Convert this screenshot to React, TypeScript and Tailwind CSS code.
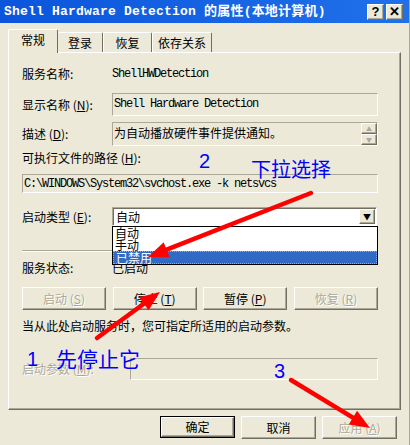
import React from 'react'

// raised / sunken bevels used all over the classic dialog
const raised =
  'border border-t-white border-l-white border-r-[#716f64] border-b-[#716f64] shadow-[inset_-1px_-1px_0_#aca899]'
const sunken =
  'border border-t-[#aca899] border-l-[#aca899] border-r-white border-b-white'
const mono = "font-['Liberation_Mono',monospace] text-[12px] tracking-[-1.2px]"
const dim = 'text-[#aca899] [text-shadow:1px_1px_0_#fff]'

function Arrow({ x1, y1, x2, y2 }: { x1: number; y1: number; x2: number; y2: number }) {
  const dx = x2 - x1
  const dy = y2 - y1
  const len = Math.hypot(dx, dy)
  const ux = dx / len
  const uy = dy / len
  const L = 20
  const W = 8
  const bx = x2 - ux * L
  const by = y2 - uy * L
  const pts = `${x2},${y2} ${bx - uy * W},${by + ux * W} ${bx + uy * W},${by - ux * W}`
  return (
    <g>
      <line x1={x1} y1={y1} x2={bx} y2={by} stroke="#ff0000" strokeWidth={4.5} strokeLinecap="round" />
      <polygon points={pts} fill="#ff0000" />
    </g>
  )
}

function Btn({ children, disabled, def, w = 'w-[84px]' }: { children: React.ReactNode; disabled?: boolean; def?: boolean; w?: string }) {
  const inner = (
    <div className={`${raised} ${def ? 'h-full' : 'h-[23px]'} w-full flex items-center justify-center bg-[#ece9d8] ${disabled ? dim : ''}`}>
      {children}
    </div>
  )
  if (def) return <div className={`${w} h-[22px] border border-black`}>{inner}</div>
  return <div className={w}>{inner}</div>
}

export default function App() {
  return (
    <div className="relative w-[410px] h-[445px] bg-[#ece9d8] overflow-hidden text-[12px] text-black font-['Noto_Sans_CJK_SC',sans-serif] leading-none border-r border-r-[#aca899]">
      {/* title bar */}
      <div className="flex items-center h-[23px] pl-[4px] pr-[6px] bg-gradient-to-r from-[#0a55dc] to-[#2070ea]">
        <span className="font-['Liberation_Mono','Noto_Sans_CJK_SC',monospace] font-bold text-[13px] text-white tracking-[0.2px]">
          Shell Hardware Detection 的属性(本地计算机)
        </span>
        <div className="ml-auto flex gap-[2px]">
          <div className={`${raised} w-[17px] h-[16px] bg-[#ece9d8] flex items-center justify-center font-['Liberation_Sans',sans-serif] font-bold text-[13px]`}>?</div>
          <div className={`${raised} w-[17px] h-[16px] bg-[#ece9d8] flex items-center justify-center font-['Liberation_Sans',sans-serif] font-bold text-[13px]`}>✕</div>
        </div>
      </div>

      {/* tabs */}
      <div className="relative z-10 flex items-end h-[23px] mt-[6px] pl-[8px]">
        <div className="w-[50px] h-[24px] -mb-[1px] bg-[#ece9d8] border-t border-l border-white border-r border-r-[#716f64] rounded-t-[2px] flex items-center justify-center pb-[3px]">常规</div>
        <div className="w-[45px] h-[20px] border-t border-white border-r border-r-[#716f64] rounded-t-[2px] flex items-center justify-center">登录</div>
        <div className="w-[49px] h-[20px] border-t border-l border-white border-r border-r-[#716f64] rounded-t-[2px] flex items-center justify-center">恢复</div>
        <div className="w-[60px] h-[20px] border-t border-l border-white border-r border-r-[#716f64] rounded-t-[2px] flex items-center justify-center">依存关系</div>
      </div>

      {/* tab panel */}
      <div className={`${raised} mx-[8px] h-[358px] pl-[13px] pt-[11px] flex flex-col`}>
        <div className="flex items-center h-[20px]">
          <div className="w-[90px]">服务名称:</div>
          <div className={mono}>ShellHWDetection</div>
        </div>

        <div className="flex items-center h-[23px] mt-[9px]">
          <div className="w-[90px]">显示名称 (<u>N</u>):</div>
          <div className={`${sunken} w-[266px] h-full pl-[1px] pt-[4px] ${mono}`}>Shell Hardware Detection</div>
        </div>

        <div className="flex items-center h-[24px] mt-[6px]">
          <div className="w-[90px]">描述 (<u>D</u>):</div>
          <div className={`${sunken} w-[266px] h-full flex`}>
            <div className="flex-1 pl-[1px] pt-[4px]">为自动播放硬件事件提供通知。</div>
            <div className="w-[16px] flex flex-col">
              <div className={`${raised} h-[11px] flex items-center justify-center text-[#aca899] text-[6px]`}>▲</div>
              <div className={`${raised} h-[11px] flex items-center justify-center text-[#aca899] text-[6px]`}>▼</div>
            </div>
          </div>
        </div>

        <div className="flex items-center h-[16px] mt-[4px]">可执行文件的路径 (<u>H</u>):</div>

        <div className={`${sunken} w-[356px] h-[19px] mt-[8px] pl-[1px] flex items-center ${mono}`}>
          C:\WINDOWS\System32\svchost.exe -k netsvcs
        </div>

        <div className="flex items-center h-[19px] mt-[14px]">
          <div className="w-[90px]">启动类型 (<u>E</u>):</div>
          <div className="w-[265px] h-full bg-white border border-t-[#aca899] border-l-[#aca899] border-r-white border-b-white shadow-[inset_1px_1px_0_#716f64] flex items-center pl-[3px] pr-[1px]">
            <span>自动</span>
            <div className={`${raised} ml-auto w-[16px] h-[15px] bg-[#ece9d8] flex items-center justify-center text-[8px]`}>▼</div>
          </div>
        </div>

        <div className="w-[356px] h-[2px] mt-[24px] border-t border-t-[#aca899] border-b border-b-white" />

        <div className="flex items-center h-[16px] mt-[8px]">
          <div className="w-[90px]">服务状态:</div>
          <div>已启动</div>
        </div>

        <div className="flex justify-between w-[356px] h-[23px] mt-[11px]">
          <Btn disabled>启动 (<u>S</u>)</Btn>
          <Btn>停止 (<u>T</u>)</Btn>
          <Btn>暂停 (<u>P</u>)</Btn>
          <Btn disabled>恢复 (<u>R</u>)</Btn>
        </div>

        <div className="flex items-center h-[16px] mt-[8px]">当从此处启动服务时，您可指定所适用的启动参数。</div>

        <div className="flex items-center h-[22px] mt-[24px]">
          <div className={`w-[108px] ${dim}`}>启动参数 (<u>M</u>):</div>
          <div className={`${sunken} w-[248px] h-full`} />
        </div>
      </div>

      {/* dialog buttons */}
      <div className="flex justify-end gap-[6px] pr-[12px] mt-[6px]">
        <Btn def w="w-[75px]">确定</Btn>
        <Btn w="w-[75px]">取消</Btn>
        <Btn disabled w="w-[75px]">应用 (<u>A</u>)</Btn>
      </div>

      {/* open combo list */}
      <div className="absolute left-[112px] top-[226px] w-[266px] h-[39px] bg-white border border-black flex flex-col">
        <div className="h-[12px] pl-[2px] flex items-center">自动</div>
        <div className="h-[12px] pl-[2px] flex items-center">手动</div>
        <div className="h-[13px] pl-[2px] flex items-center bg-[#316ac5] text-white border border-dotted border-[#e8a040]">已禁用</div>
      </div>

      {/* annotations */}
      <svg className="absolute inset-0 pointer-events-none" width={410} height={445}>
        <Arrow x1={311} y1={193} x2={148} y2={257} />
        <Arrow x1={97} y1={338} x2={160} y2={292} />
        <Arrow x1={291} y1={380} x2={370} y2={428} />
      </svg>
      <div className="absolute left-[199px] top-[151px] text-[20px] text-[#0000ff] font-['Liberation_Sans',sans-serif] pointer-events-none">2</div>
      <div className="absolute left-[251px] top-[159px] text-[20px] text-[#0000ff] pointer-events-none">下拉选择</div>
      <div className="absolute left-[27px] top-[349px] text-[20px] text-[#0000ff] font-['Liberation_Sans',sans-serif] pointer-events-none">1</div>
      <div className="absolute left-[56px] top-[348px] text-[21px] text-[#0000ff] pointer-events-none">先停止它</div>
      <div className="absolute left-[274px] top-[361px] text-[20px] text-[#0000ff] font-['Liberation_Sans',sans-serif] pointer-events-none">3</div>
    </div>
  )
}
